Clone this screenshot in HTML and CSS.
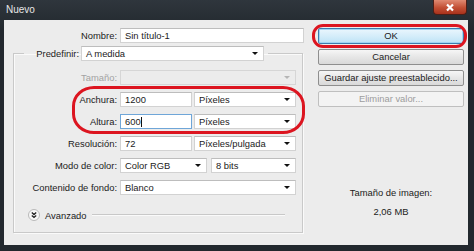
FILE: index.html
```html
<!DOCTYPE html>
<html lang="es">
<head>
    <meta charset="UTF-8">
    <title>Nuevo</title>
    <link rel="stylesheet" href="styles.css">
</head>
<body>
    <div class="window">
        <div class="titlebar">
            <span class="title">Nuevo</span>
            <div class="close">
                <svg width="10" height="9" viewBox="0 0 10 9"><path d="M2 1.5 L8 7.5 M8 1.5 L2 7.5" stroke="#fff" stroke-width="2.2"/></svg>
            </div>
        </div>
        <div class="client">
            <div class="left">
                <div class="name-row">
                    <label class="lbl">Nombre:</label>
                    <div class="field">Sin título-1</div>
                </div>
                <fieldset class="group">
                    <legend class="preset">
                        <label class="lbl preset-lbl">Predefinir:</label>
                        <div class="field select preset-sel">A medida</div>
                    </legend>
                    <div class="rows">
                        <label class="lbl disabled">Tamaño:</label>
                        <div class="field select off"></div>

                        <label class="lbl">Anchura:</label>
                        <div class="pair">
                            <div class="field num">1200</div>
                            <div class="field select">Píxeles</div>
                        </div>

                        <label class="lbl">Altura:</label>
                        <div class="pair">
                            <div class="field num focus">600<span class="caret"></span></div>
                            <div class="field select">Píxeles</div>
                        </div>

                        <label class="lbl">Resolución:</label>
                        <div class="pair">
                            <div class="field num">72</div>
                            <div class="field select">Píxeles/pulgada</div>
                        </div>

                        <label class="lbl">Modo de color:</label>
                        <div class="pair mode">
                            <div class="field select">Color RGB</div>
                            <div class="field select">8 bits</div>
                        </div>

                        <label class="lbl">Contenido de fondo:</label>
                        <div class="field select">Blanco</div>
                    </div>
                    <div class="advanced">
                        <span class="adv-icon">
                            <svg width="12" height="12" viewBox="0 0 12 12">
                                <circle cx="6" cy="6" r="5.5" fill="#f7f7f7" stroke="#b9b9b9"/>
                                <path d="M3.8 3.6 L6 5.6 L8.2 3.6 M3.8 6.4 L6 8.4 L8.2 6.4" fill="none" stroke="#222" stroke-width="1.3"/>
                            </svg>
                        </span>
                        <span class="adv-text">Avanzado</span>
                        <span class="adv-line"></span>
                    </div>
                </fieldset>
                <div class="mark mark-size"></div>
            </div>
            <div class="right">
                <div class="btn default">OK</div>
                <div class="btn">Cancelar</div>
                <div class="btn">Guardar ajuste preestablecido...</div>
                <div class="btn off">Eliminar valor...</div>
                <div class="img-size">
                    <p>Tamaño de imagen:</p>
                    <p>2,06 MB</p>
                </div>
                <div class="mark mark-ok"></div>
            </div>
        </div>
    </div>
</body>
</html>
```

FILE: styles.css
```css
body {
    margin: 0;
    background-color: #252b31;
    font-family: "Liberation Sans", Arial, sans-serif;
    font-size: 9.4px;
    color: #1b1b1b;
}

.window {
    width: 474px;
    height: 251px;
    background: linear-gradient(#2f363d, #22282e 30px, #22282e);
    display: flex;
    flex-direction: column;
}

.titlebar {
    height: 20px;
    display: flex;
    align-items: flex-start;
    justify-content: space-between;
}

.title {
    color: #e6e6e6;
    font-size: 10px;
    padding: 4px 0 0 6px;
}

.close {
    width: 34px;
    height: 15px;
    margin-right: 7px;
    box-sizing: border-box;
    border: 1px solid #4d1e16;
    border-top: none;
    border-radius: 0 0 4px 4px;
    background: linear-gradient(#e08a72, #c24f34 55%, #a8321c);
    display: flex;
    align-items: center;
    justify-content: center;
}

.client {
    margin: 0 6px 0 4px;
    height: 225px;
    background-color: #ececec;
    display: flex;
    padding: 8px 0 0 9px;
    box-sizing: border-box;
}

.left {
    width: 291px;
    position: relative;
}

.lbl {
    text-align: right;
    white-space: nowrap;
    line-height: 15px;
}

.disabled {
    color: #a3a3a3;
}

.name-row {
    display: flex;
    gap: 3px;
}

.name-row .lbl {
    width: 104px;
}

.field {
    height: 15px;
    line-height: 13px;
    box-sizing: border-box;
    background-color: #fff;
    border: 1px solid #d2d2d2;
    border-top-color: #bdbdbd;
    padding-left: 4px;
    white-space: nowrap;
    overflow: hidden;
    position: relative;
}

.name-row .field {
    width: 184px;
}

.select::after {
    content: "";
    position: absolute;
    right: 5px;
    top: 5px;
    border-left: 3px solid transparent;
    border-right: 3px solid transparent;
    border-top: 3px solid #111;
}

.field.off {
    background-color: #ececec;
    border-color: #d6d6d6;
}

.field.off::after {
    border-top-color: #b5b5b5;
}

.group {
    margin: 3px 0 0 0;
    padding: 9px 6px 10px 0;
    width: 290px;
    box-sizing: border-box;
    border: 1px solid #c9c9c9;
    box-shadow: inset 1px 1px 0 #fafafa, 1px 1px 0 #fafafa;
}

.preset {
    margin-left: 10px;
    padding: 0 4px 0 0;
    display: flex;
    gap: 2px;
}

.preset-lbl {
    width: 55px;
}

.preset-sel {
    width: 183px;
}

.rows {
    display: grid;
    grid-template-columns: 103px 176px;
    column-gap: 3px;
    row-gap: 7px;
}

.pair {
    display: flex;
    justify-content: space-between;
}

.pair .num {
    width: 72px;
}

.pair .select {
    width: 102px;
}

.pair.mode .select:first-child {
    width: 87px;
}

.pair.mode .select:last-child {
    width: 85px;
}

.focus {
    border: 1px solid #6fa6d8;
}

.caret {
    display: inline-block;
    width: 1px;
    height: 10px;
    background-color: #111;
    vertical-align: -2px;
}

.advanced {
    margin-top: 13px;
    display: flex;
    align-items: center;
    height: 14px;
    padding: 0 11px 0 14px;
}

.adv-icon {
    display: flex;
}

.adv-text {
    margin-left: 5px;
}

.adv-line {
    flex: 1;
    margin-left: 5px;
    border-top: 1px solid #c8c8c8;
    border-bottom: 1px solid #fafafa;
}

.right {
    width: 146px;
    margin-left: 14px;
    position: relative;
    display: flex;
    flex-direction: column;
    gap: 5px;
}

.btn {
    height: 16px;
    line-height: 14px;
    box-sizing: border-box;
    text-align: center;
    border: 1px solid #8e8e8e;
    border-radius: 2px;
    background: linear-gradient(#f6f6f6, #e6e6e6 50%, #d9d9d9);
}

.btn.default {
    border-color: #3d7bad;
    background: linear-gradient(#eaf6fd, #d5edfa 50%, #bee3f6);
    box-shadow: inset 0 0 0 1px #9fd5f3;
}

.btn.off {
    color: #9d9d9d;
    border-color: #bfbfbf;
    background: #f3f3f3;
}

.img-size {
    margin-top: 75px;
    text-align: center;
}

.img-size p {
    margin: 0 0 8px 0;
    line-height: 11px;
}

.mark {
    position: absolute;
    border: 3px solid #dc1520;
    box-sizing: border-box;
}

.mark-size {
    left: 59px;
    top: 58px;
    width: 233px;
    height: 48px;
    border-radius: 22px / 20px;
}

.mark-ok {
    left: -6px;
    top: -4px;
    width: 155px;
    height: 24px;
    border-radius: 11px;
}
```
